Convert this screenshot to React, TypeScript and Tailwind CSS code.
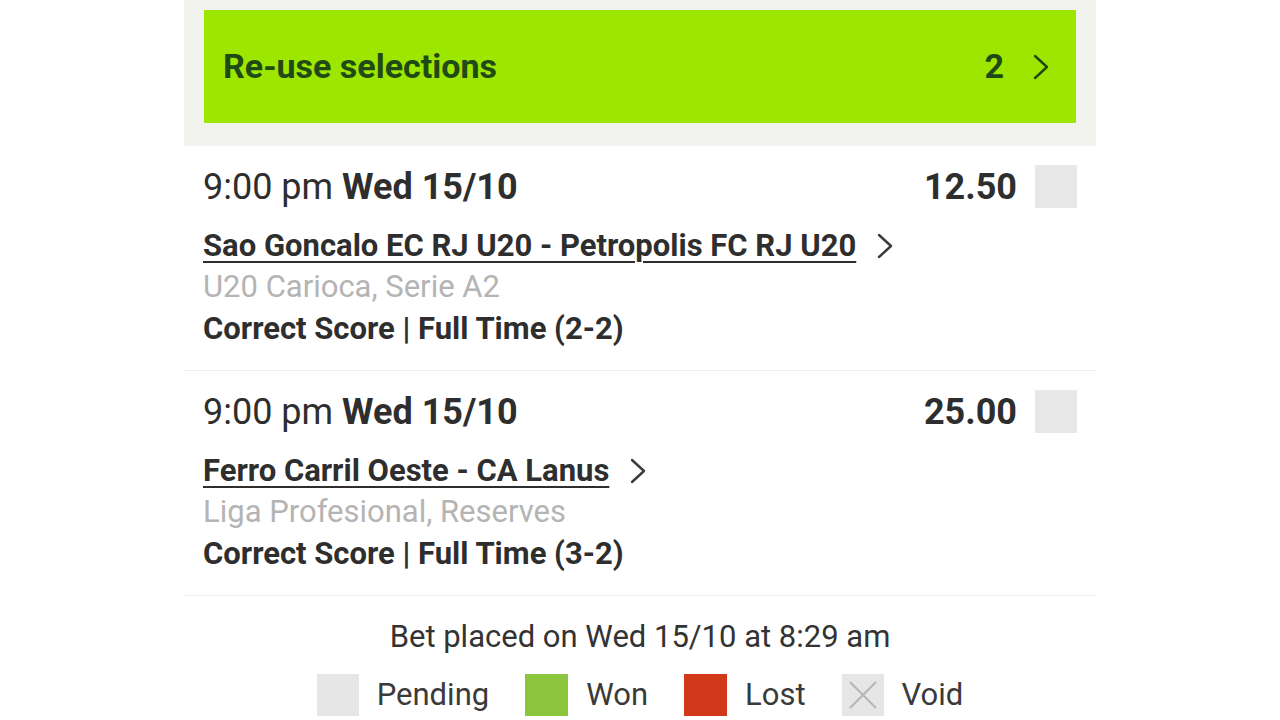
import React from "react";

type Selection = {
  time: string;
  date: string;
  odds: string;
  match: string;
  league: string;
  market: string;
};

const selections: Selection[] = [
  {
    time: "9:00 pm",
    date: "Wed 15/10",
    odds: "12.50",
    match: "Sao Goncalo EC RJ U20 - Petropolis FC RJ U20",
    league: "U20 Carioca, Serie A2",
    market: "Correct Score | Full Time (2-2)",
  },
  {
    time: "9:00 pm",
    date: "Wed 15/10",
    odds: "25.00",
    match: "Ferro Carril Oeste - CA Lanus",
    league: "Liga Profesional, Reserves",
    market: "Correct Score | Full Time (3-2)",
  },
];

function Chevron({ className }: { className?: string }) {
  return (
    <svg viewBox="0 0 18 28" className={className} fill="none">
      <polyline points="3,3 15,14 3,25" stroke="currentColor" strokeWidth="2.4" strokeLinecap="round" strokeLinejoin="round" />
    </svg>
  );
}

function SelectionRow({ s }: { s: Selection }) {
  return (
    <div className="px-[19px] pt-[19px] pb-[20px] border-b border-[#ececec] text-[#2e2e2e]">
      <div className="h-[43px] flex items-center justify-between">
        <div className="text-[36px] leading-[40px]">
          {s.time} <span className="font-bold">{s.date}</span>
        </div>
        <div className="flex items-center gap-[18px]">
          <span className="text-[36px] leading-[40px] font-bold">{s.odds}</span>
          <div className="w-[42px] h-[43px] bg-[#e8e8e8]" />
        </div>
      </div>
      <div className="mt-[18px] h-[40px] flex items-center gap-[20px]">
        <span className="text-[31px] leading-[40px] font-bold underline decoration-2 underline-offset-[5px]">
          {s.match}
        </span>
        <Chevron className="w-[18px] h-[28px] text-[#3a3a3a]" />
      </div>
      <div className="text-[31px] leading-[42px] text-[#b4b4b4]">{s.league}</div>
      <div className="text-[31px] leading-[42px] font-bold">{s.market}</div>
    </div>
  );
}

function Legend({ label, box }: { label: string; box: React.ReactNode }) {
  return (
    <div className="flex items-center gap-[18px]">
      {box}
      <span className="text-[31px] leading-[42px] text-[#3a3a3a]">{label}</span>
    </div>
  );
}

export default function App() {
  return (
    <div className="min-h-screen bg-white flex justify-center" style={{ fontFamily: "Roboto, 'Noto Sans', sans-serif" }}>
      <div className="w-[912px]">
        <div className="bg-[#f2f2ef] px-5 pt-[10px] pb-[23px]">
          <div className="h-[113px] bg-[#9de600] flex items-center justify-between pl-[19px] pr-[26px] text-[#1f4a16]">
            <span className="text-[34px] font-bold">Re-use selections</span>
            <div className="flex items-center gap-[28px]">
              <span className="text-[34px] font-bold">2</span>
              <Chevron className="w-[18px] h-[30px]" />
            </div>
          </div>
        </div>

        {selections.map((s, i) => (
          <SelectionRow key={i} s={s} />
        ))}

        <div className="pt-[21px] flex flex-col items-center">
          <div className="text-[31px] leading-[40px] text-[#333]">Bet placed on Wed 15/10 at 8:29 am</div>
          <div className="mt-[17px] flex items-center gap-[36px]">
            <Legend label="Pending" box={<div className="w-[42px] h-[42px] bg-[#e6e6e6]" />} />
            <Legend label="Won" box={<div className="w-[43px] h-[42px] bg-[#8cc63f]" />} />
            <Legend label="Lost" box={<div className="w-[43px] h-[42px] bg-[#d2391b]" />} />
            <Legend
              label="Void"
              box={
                <div className="w-[42px] h-[42px] bg-[#e6e6e6] flex items-center justify-center">
                  <svg viewBox="0 0 42 42" className="w-[42px] h-[42px]">
                    <line x1="8" y1="8" x2="34" y2="34" stroke="#b5b5b5" strokeWidth="2" />
                    <line x1="34" y1="8" x2="8" y2="34" stroke="#b5b5b5" strokeWidth="2" />
                  </svg>
                </div>
              }
            />
          </div>
        </div>
      </div>
    </div>
  );
}
